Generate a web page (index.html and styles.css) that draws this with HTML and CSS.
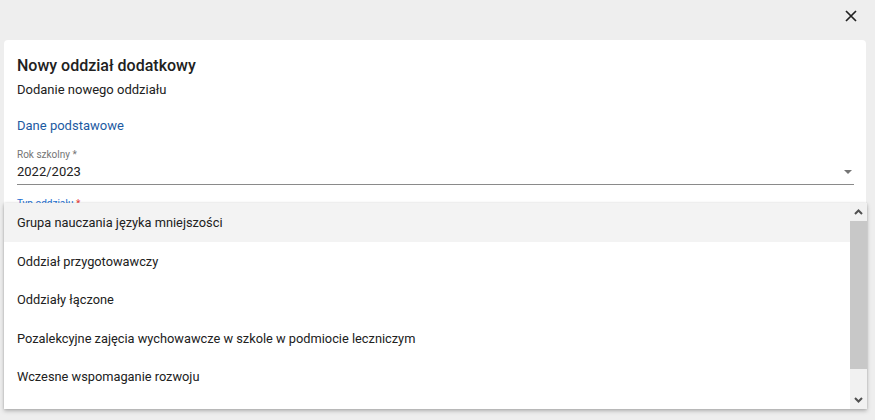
FILE: index.html
```html
<!DOCTYPE html>
<html lang="pl">
  <head>
    <meta charset="UTF-8" />
    <meta name="viewport" content="width=device-width, initial-scale=1.0" />
    <title>Nowy oddział dodatkowy</title>
    <link rel="stylesheet" href="styles.css">
  </head>
  <body>
    <div class="topbar">
      <button class="close-btn" aria-label="Zamknij">
        <svg width="12" height="12" viewBox="0 0 12 12">
          <path d="M1 1 L11 11 M11 1 L1 11" stroke="#222" stroke-width="1.7" fill="none" />
        </svg>
      </button>
    </div>

    <div class="card">
      <h1>Nowy oddział dodatkowy</h1>
      <p class="subtitle">Dodanie nowego oddziału</p>

      <h2 class="section">Dane podstawowe</h2>

      <div class="field">
        <label>Rok szkolny *</label>
        <div class="select">
          <span>2022/2023</span>
          <span class="caret"></span>
        </div>
      </div>

      <div class="field focused">
        <label>Typ oddziału <span class="req">*</span></label>
      </div>
    </div>

    <div class="dropdown">
      <ul class="options">
        <li class="active">Grupa nauczania języka mniejszości</li>
        <li>Oddział przygotowawczy</li>
        <li>Oddziały łączone</li>
        <li>Pozalekcyjne zajęcia wychowawcze w szkole w podmiocie leczniczym</li>
        <li>Wczesne wspomaganie rozwoju</li>
      </ul>
      <div class="scrollbar">
        <div class="sb-btn">
          <svg width="9" height="6" viewBox="0 0 9 6">
            <path d="M1 5 L4.5 1.5 L8 5" stroke="#505050" stroke-width="2" fill="none" />
          </svg>
        </div>
        <div class="sb-thumb"></div>
        <div class="sb-track"></div>
        <div class="sb-btn">
          <svg width="9" height="6" viewBox="0 0 9 6">
            <path d="M1 1 L4.5 4.5 L8 1" stroke="#505050" stroke-width="2" fill="none" />
          </svg>
        </div>
      </div>
    </div>
  </body>
</html>
```

FILE: styles.css
```css
body {
  margin: 0;
  padding: 0;
  font-family: "Roboto", "Liberation Sans", sans-serif;
  background-color: #eeeeee;
  color: #212121;
  height: 420px;
  overflow: hidden;
}

.topbar {
  height: 40px;
  display: flex;
  justify-content: flex-end;
  align-items: center;
  padding-right: 18px;
}

.close-btn {
  border: none;
  background: none;
  padding: 0;
  margin-top: -9px;
  width: 12px;
  height: 12px;
  display: flex;
}

.card {
  background-color: white;
  margin: 0 9px 0 4px;
  border-radius: 4px;
  padding: 16px 12px 0 13px;
  height: 360px;
  box-sizing: border-box;
}

.card h1 {
  font-size: 16px;
  line-height: 20px;
  font-weight: 500;
  margin: 0;
  color: #212121;
}

.subtitle {
  font-size: 13px;
  line-height: 16px;
  margin: 6px 0 0;
}

.section {
  font-size: 13px;
  line-height: 16px;
  font-weight: 400;
  color: #1c5aa2;
  margin: 20px 0 0;
}

.field {
  margin-top: 15px;
}

.field label {
  display: block;
  font-size: 10px;
  line-height: 12px;
  color: #757575;
}

.select {
  display: flex;
  justify-content: space-between;
  align-items: center;
  font-size: 13px;
  line-height: 16px;
  margin-top: 3px;
  padding-bottom: 4px;
  border-bottom: 1px solid #8a8a8a;
}

.caret {
  width: 0;
  height: 0;
  border-left: 4px solid transparent;
  border-right: 4px solid transparent;
  border-top: 4px solid #757575;
  margin-right: 2px;
}

.field.focused {
  margin-top: 13px;
}

.field.focused label {
  color: #1c6fd0;
}

.req {
  color: #e53935;
}

.dropdown {
  position: absolute;
  left: 4px;
  top: 203px;
  width: 863px;
  height: 206px;
  background-color: white;
  display: flex;
  box-shadow: 0 2px 4px rgba(0, 0, 0, 0.25), 0 0 2px rgba(0, 0, 0, 0.12);
}

.options {
  list-style: none;
  margin: 0;
  padding: 0;
  flex: 1;
}

.options li {
  height: 38.5px;
  line-height: 40px;
  padding-left: 13px;
  font-size: 12.8px;
  color: #212121;
  white-space: nowrap;
}

.options li.active {
  background-color: #f3f3f3;
}

.scrollbar {
  width: 17px;
  display: flex;
  flex-direction: column;
  background-color: #f1f1f1;
}

.sb-btn {
  height: 18px;
  display: flex;
  justify-content: center;
  align-items: center;
}

.sb-thumb {
  height: 148px;
  background-color: #c8c8c8;
}

.sb-track {
  flex: 1;
}
```
